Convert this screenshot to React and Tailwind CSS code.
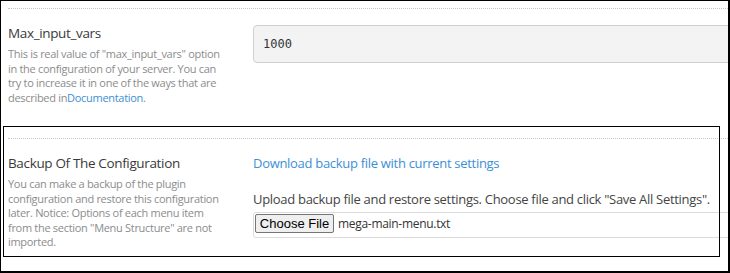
const font = { fontFamily: '"Open Sans", "Noto Sans", sans-serif' }

const Section = ({ title, lines, children }) => (
  <div className="h-[130px] pl-[7px]">
    <div className="border-t border-dotted border-[#c8c8c8]" />
    <div className="flex items-start pt-[14px]">
      <div className="w-[245px] shrink-0">
        <div className="text-[13.5px] leading-[20px] tracking-[-0.35px] text-[#3a3a3a]">{title}</div>
        <div className="mt-[4px] text-[11px] leading-[14.6px] tracking-[-0.3px] text-[#8c8c8c]">
          {lines.map((l, i) => (
            <div key={i} className="whitespace-nowrap">{l}</div>
          ))}
        </div>
      </div>
      <div className="flex-1 min-w-0">{children}</div>
    </div>
  </div>
)

export default function App() {
  return (
    <div
      style={font}
      className="relative w-[730px] h-[273px] overflow-hidden bg-white border-t border-l border-r-2 border-b-2 border-black"
    >
      <div className="pt-[7px]">
        <Section
          title="Max_input_vars"
          lines={[
            'This is real value of "max_input_vars" option',
            'in the configuration of your server. You can',
            'try to increase it in one of the ways that are',
            <>described in<a className="text-[#3d8fd4]">Documentation</a>.</>,
          ]}
        >
          <div className="mt-[2px] h-[38px] w-[520px] rounded-[4px] border border-[#cfcfcf] bg-[#f3f3f3] pl-[9px] flex items-center">
            <span className="text-[12px] text-[#333]" style={{ fontFamily: '"DejaVu Sans Mono", monospace' }}>1000</span>
          </div>
        </Section>
        <Section
          title="Backup Of The Configuration"
          lines={[
            'You can make a backup of the plugin',
            'configuration and restore this configuration',
            'later. Notice: Options of each menu item',
            'from the section "Menu Structure" are not',
            'imported.',
          ]}
        >
          <a className="block text-[13px] leading-[20px] tracking-[-0.3px] text-[#3d8fd4]">Download backup file with current settings</a>
          <div className="mt-[16px] text-[13px] leading-[20px] tracking-[-0.3px] text-[#444] whitespace-nowrap">
            Upload backup file and restore settings. Choose file and click "Save All Settings".
          </div>
          <div className="mt-[3px] h-[26px] w-[520px] rounded-[3px] border border-[#dcdcdc] pt-[1px] pl-[1px] flex items-start">
            <span
              className="h-[19px] w-[79px] flex items-center justify-center rounded-[2px] border border-[#767676] bg-[#efefef] text-[13px] text-black"
              style={{ fontFamily: '"Liberation Sans", Arial, sans-serif' }}
            >
              Choose File
            </span>
            <span className="ml-[4px] mt-[1px] text-[12px] tracking-[-0.3px] text-[#333]">mega-main-menu.txt</span>
          </div>
        </Section>
      </div>
      <div className="absolute left-[2px] top-[125px] w-[717px] h-[131px] border border-black pointer-events-none" />
    </div>
  )
}
